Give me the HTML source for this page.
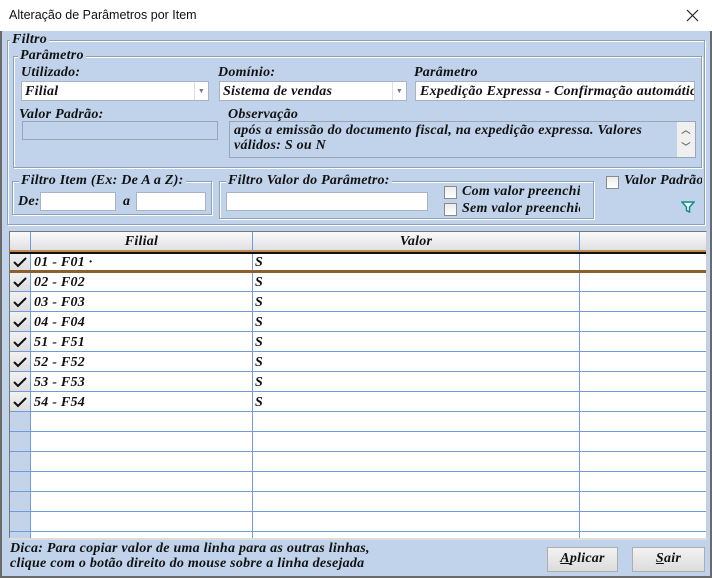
<!DOCTYPE html>
<html><head><meta charset="utf-8"><style>
*{box-sizing:border-box;margin:0;padding:0}
body{width:712px;height:578px;overflow:hidden;background:#c1d3ea;position:relative;font-family:"Liberation Serif",serif;font-weight:bold;font-style:italic;font-size:14px;letter-spacing:0.25px;color:#111}
.a{position:absolute;white-space:nowrap;overflow:hidden}
.grp{position:absolute;border:1px solid #8fa0b5;box-shadow:1px 1px 0 #fff inset,1px 1px 0 #fff}
.lbl{position:absolute;background:#c1d3ea;padding:0 2px;line-height:14px}
.in{position:absolute;background:#fff;border:1px solid #a8b4c4}
.cb{position:absolute;width:13px;height:13px;border:1px solid #8a8a8a;background:linear-gradient(#ececec,#fff)}
.btn{position:absolute;border:1px solid #adadad;background:linear-gradient(#f2f2f2,#dcdcdc);text-align:center;line-height:22px}
</style></head><body>
<div class="a" style="left:0;top:0;width:712px;height:31px;background:#fff;font-style:normal;font-weight:normal;font-family:'Liberation Sans',sans-serif;font-size:12.5px;letter-spacing:0;line-height:31px;padding-left:9px">Alteração de Parâmetros por Item</div>
<svg class="a" style="left:686px;top:9px" width="13" height="13"><path d="M1 1L12 12M12 1L1 12" stroke="#222" stroke-width="1.2"/></svg>
<div class="a" style="left:0;top:31px;width:2px;height:547px;background:#6a6a6a"></div>
<div class="a" style="left:710px;top:31px;width:2px;height:547px;background:#6a6a6a"></div>
<div class="a" style="left:0;top:576px;width:712px;height:2px;background:#6a6a6a"></div>

<div class="grp" style="left:7px;top:40px;width:698px;height:185px"></div>
<div class="lbl" style="left:10px;top:33px">Filtro</div>
<div class="grp" style="left:13px;top:56px;width:689px;height:112px"></div>
<div class="lbl" style="left:18px;top:49px">Parâmetro</div>

<div class="a" style="left:21px;top:65px">Utilizado:</div>
<div class="in" style="left:21px;top:81px;width:188px;height:20px;padding:1px 3px;line-height:17px">Filial</div>
<div class="a" style="left:194px;top:82px;width:14px;height:18px;border-left:1px solid #ddd;font-size:7px;color:#777;text-align:center;line-height:18px;font-style:normal">▼</div>
<div class="a" style="left:218px;top:65px">Domínio:</div>
<div class="in" style="left:219px;top:81px;width:188px;height:20px;padding:1px 3px;line-height:17px;overflow:hidden;white-space:nowrap">Sistema de vendas</div>
<div class="a" style="left:392px;top:82px;width:14px;height:18px;border-left:1px solid #ddd;font-size:7px;color:#777;text-align:center;line-height:18px;font-style:normal;background:#fff">▼</div>
<div class="a" style="left:414px;top:65px;width:66px">Parâmetro</div>
<div class="in" style="left:415px;top:81px;width:280px;height:20px;padding:1px 4px;line-height:17px;overflow:hidden;white-space:nowrap">Expedição Expressa - Confirmação automática</div>

<div class="a" style="left:19px;top:107px">Valor Padrão:</div>
<div class="a" style="left:22px;top:121px;width:196px;height:19px;border:1px solid #9aa6b6"></div>
<div class="a" style="left:228px;top:107px;width:70px">Observação</div>
<div class="a" style="left:229px;top:121px;width:467px;height:37px;border:1px solid #9aa6b6;padding:1px 4px;line-height:15px;white-space:normal">após a emissão do documento fiscal, na expedição expressa. Valores<br>válidos: S ou N</div>
<div class="a" style="left:677px;top:122px;width:18px;height:35px;background:#f0f0f0;font-size:9px;color:#666;text-align:center;line-height:17px;font-style:normal">︿<br>﹀</div>

<div class="grp" style="left:12px;top:181px;width:200px;height:34px"></div>
<div class="lbl" style="left:19px;top:174px">Filtro Item (Ex: De A a Z):</div>
<div class="a" style="left:18px;top:194px">De:</div>
<div class="in" style="left:40px;top:192px;width:76px;height:19px"></div>
<div class="a" style="left:123px;top:194px">a</div>
<div class="in" style="left:136px;top:192px;width:70px;height:19px"></div>

<div class="grp" style="left:219px;top:181px;width:375px;height:38px"></div>
<div class="lbl" style="left:226px;top:174px">Filtro Valor do Parâmetro:</div>
<div class="in" style="left:226px;top:192px;width:202px;height:19px"></div>
<div class="cb" style="left:444px;top:186px"></div>
<div class="a" style="left:462px;top:184px;width:118px">Com valor preenchido</div>
<div class="cb" style="left:444px;top:203px"></div>
<div class="a" style="left:462px;top:201px;width:118px">Sem valor preenchido</div>
<div class="cb" style="left:606px;top:176px"></div>
<div class="a" style="left:624px;top:173px;width:78px">Valor Padrão</div>
<svg class="a" style="left:681px;top:201px" width="14" height="12"><path d="M1 1H13L8.5 6V11L5.5 9.5V6Z" fill="#fff" stroke="#0a8a8a" stroke-width="1.5"/></svg>

<!-- grid -->
<div class="a" style="left:9px;top:231px;width:698px;height:309px;background:#fff;border-left:1px solid #777;border-top:1px solid #777;border-right:1px solid #ccc"></div>
<div class="a" style="left:10px;top:232px;width:696px;height:20px;background:linear-gradient(#fafafa,#e0e0e4);border-bottom:2px solid #c08a4a"></div>
<div class="a" style="left:31px;top:234px;width:221px;text-align:center">Filial</div>
<div class="a" style="left:253px;top:234px;width:326px;text-align:center">Valor</div>
<div class="a" style="left:10px;top:252px;width:696px;height:286px">
<div id="rows"></div>
</div>
<script>
var d=["01 - F01 ·","02 - F02","03 - F03","04 - F04","51 - F51","52 - F52","53 - F53","54 - F54"],h="";
for(var i=0;i<15;i++){var y=i*20;
h+='<div class="a" style="left:0;top:'+y+'px;width:20px;height:20px;background:'+(i<8?'linear-gradient(#f2f2f2,#dcdcdc)':'#c3d4ea')+';border-bottom:1px solid #6f9bd8"></div>';
h+='<div class="a" style="left:20px;top:'+y+'px;width:676px;height:20px;border-bottom:1px solid #6f9bd8"></div>';
if(i<8){h+='<svg class="a" style="left:3px;top:'+(y+5)+'px" width="14" height="11"><path d="M1 5L5 9L13 1" fill="none" stroke="#111" stroke-width="2"/></svg>';
h+='<div class="a" style="left:24px;top:'+(y+3)+'px">'+d[i]+'</div><div class="a" style="left:245px;top:'+(y+3)+'px">S</div>';}}
h+='<div class="a" style="left:20px;top:0;width:1px;height:286px;background:#6f9bd8"></div><div class="a" style="left:242px;top:0;width:1px;height:286px;background:#6f9bd8"></div><div class="a" style="left:569px;top:0;width:1px;height:286px;background:#6f9bd8"></div>';
document.getElementById('rows').innerHTML=h;
</script>
<div class="a" style="left:10px;top:252px;width:696px;height:21px;border-top:2px solid #111;border-bottom:3px solid #8a6030"></div>
<div class="a" style="left:30px;top:232px;width:1px;height:20px;background:#6f9bd8"></div>
<div class="a" style="left:252px;top:232px;width:1px;height:20px;background:#6f9bd8"></div>
<div class="a" style="left:579px;top:232px;width:1px;height:20px;background:#6f9bd8"></div>
<div class="a" style="left:9px;top:538px;width:698px;height:2px;background:#ddd"></div>

<div class="a" style="left:10px;top:541px;line-height:15px">Dica: Para copiar valor de uma linha para as outras linhas,<br>clique com o botão direito do mouse sobre a linha desejada</div>
<div class="btn" style="left:547px;top:547px;width:71px;height:25px"><u>A</u>plicar</div>
<div class="btn" style="left:632px;top:547px;width:73px;height:25px"><u>S</u>air</div>
</body></html>
